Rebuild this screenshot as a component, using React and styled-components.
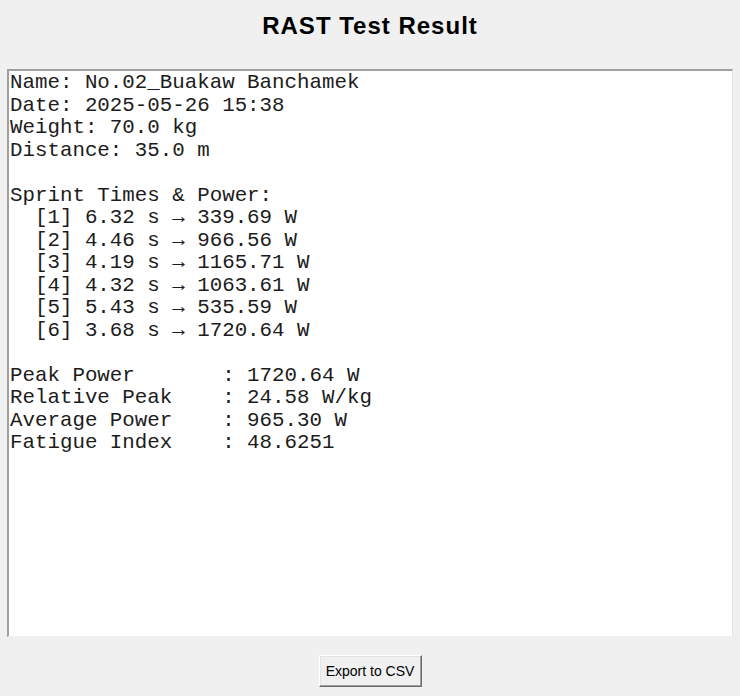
import React from 'react';
import styled, { createGlobalStyle } from 'styled-components';

const sprints = [
  { time: 6.32, power: 339.69 },
  { time: 4.46, power: 966.56 },
  { time: 4.19, power: 1165.71 },
  { time: 4.32, power: 1063.61 },
  { time: 5.43, power: 535.59 },
  { time: 3.68, power: 1720.64 },
];

const summary = [
  ['Peak Power', '1720.64 W'],
  ['Relative Peak', '24.58 W/kg'],
  ['Average Power', '965.30 W'],
  ['Fatigue Index', '48.6251'],
];

function buildReport() {
  const lines = [
    'Name: No.02_Buakaw Banchamek',
    'Date: 2025-05-26 15:38',
    'Weight: 70.0 kg',
    'Distance: 35.0 m',
    '',
    'Sprint Times & Power:',
  ];
  sprints.forEach((s, i) => {
    lines.push(`  [${i + 1}] ${s.time.toFixed(2)} s \u2192 ${s.power.toFixed(2)} W`);
  });
  lines.push('');
  summary.forEach(([label, value]) => {
    lines.push(`${label.padEnd(17, ' ')}: ${value}`);
  });
  return lines.join('\n');
}

function App() {
  return (
    <>
      <GlobalStyle />
      <Window>
        <Title>RAST Test Result</Title>
        <ResultBox>
          <ResultText>{buildReport()}</ResultText>
        </ResultBox>
        <Footer>
          <Button type="button">Export to CSV</Button>
        </Footer>
      </Window>
    </>
  );
}

export default App;

const GlobalStyle = createGlobalStyle`
  html, body {
    margin: 0;
    padding: 0;
    background: #f0f0f0;
  }
`;

const Window = styled.div`
  display: flex;
  flex-direction: column;
  width: 740px;
  height: 696px;
  background: #f0f0f0;
`;

const Title = styled.h1`
  margin: 0;
  height: 69px;
  padding-top: 13px;
  box-sizing: border-box;
  text-align: center;
  font-family: 'Liberation Sans', Arial, sans-serif;
  font-size: 24px;
  line-height: 26px;
  letter-spacing: 1px;
  font-weight: bold;
  color: #000;
`;

const ResultBox = styled.div`
  margin: 0 7px;
  height: 568px;
  box-sizing: border-box;
  background: #fff;
  border-top: 2px solid #a0a0a0;
  border-left: 2px solid #a0a0a0;
  border-right: 1px solid #e3e3e3;
  border-bottom: 1px solid #f0f0f0;
  padding: 1px 1px;
  overflow: hidden;
`;

const ResultText = styled.pre`
  margin: 0;
  font-family: 'Liberation Mono', 'Courier New', monospace;
  font-size: 20.8px;
  line-height: 22.5px;
  color: #1c1c1c;
  white-space: pre;
`;

const Footer = styled.div`
  display: flex;
  justify-content: center;
  padding-top: 18px;
`;

const Button = styled.button`
  width: 103px;
  height: 32px;
  padding: 0;
  background: #f0f0f0;
  font-family: 'Liberation Sans', Arial, sans-serif;
  font-size: 14px;
  color: #000;
  border: 1px solid;
  border-color: #ffffff #696969 #696969 #ffffff;
  box-shadow: inset -1px -1px 0 #a0a0a0, inset 1px 1px 0 #e3e3e3;
  cursor: pointer;
`;
